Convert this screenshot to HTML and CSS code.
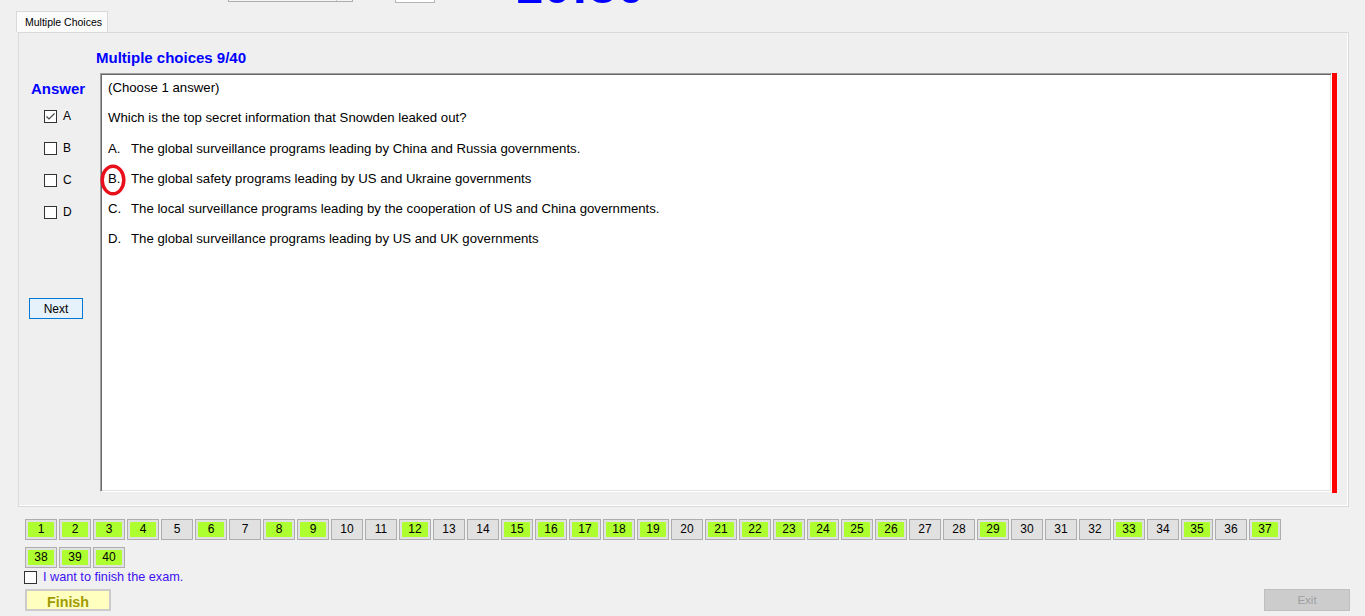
FILE: index.html
```html
<!DOCTYPE html>
<html>
<head>
<meta charset="utf-8">
<link rel="stylesheet" href="styles.css">
</head>
<body>
<div class="top">
  <div class="combo"><div class="combo-btn"></div></div>
  <div class="smallbox"></div>
  <div class="timer">10:30</div>
</div>
<div class="tabs"><div class="tab">Multiple Choices</div></div>
<div class="panel">
  <div class="title">Multiple choices 9/40</div>
  <div class="main">
    <div class="answers">
      <div class="ans-head">Answer</div>
      <div class="opt"><span class="cb"><svg width="11" height="11" viewBox="0 0 11 11"><polyline points="1.5,5.5 4,8 9.5,2.5" fill="none" stroke="#444" stroke-width="1.2"/></svg></span>A</div>
      <div class="opt"><span class="cb"></span>B</div>
      <div class="opt"><span class="cb"></span>C</div>
      <div class="opt"><span class="cb"></span>D</div>
      <button class="next">Next</button>
    </div>
    <div class="qbox">
      <div class="line">(Choose 1 answer)</div>
      <div class="line q">Which is the top secret information that Snowden leaked out?</div>
      <div class="line"><span class="lbl">A.</span>The global surveillance programs leading by China and Russia governments.</div>
      <div class="line mark"><span class="lbl">B.</span>The global safety programs leading by US and Ukraine governments<svg class="ring" width="26" height="32" viewBox="0 0 26 32"><ellipse cx="13" cy="16" rx="10.8" ry="13.8" fill="none" stroke="#e8101a" stroke-width="3.5"/></svg></div>
      <div class="line"><span class="lbl">C.</span>The local surveillance programs leading by the cooperation of US and China governments.</div>
      <div class="line"><span class="lbl">D.</span>The global surveillance programs leading by US and UK governments</div>
    </div>
    <div class="redbar"></div>
  </div>
</div>
<div class="nums">
  <div class="num"><span class="done">1</span></div>
  <div class="num"><span class="done">2</span></div>
  <div class="num"><span class="done">3</span></div>
  <div class="num"><span class="done">4</span></div>
  <div class="num"><span>5</span></div>
  <div class="num"><span class="done">6</span></div>
  <div class="num"><span>7</span></div>
  <div class="num"><span class="done">8</span></div>
  <div class="num"><span class="done">9</span></div>
  <div class="num"><span>10</span></div>
  <div class="num"><span>11</span></div>
  <div class="num"><span class="done">12</span></div>
  <div class="num"><span>13</span></div>
  <div class="num"><span>14</span></div>
  <div class="num"><span class="done">15</span></div>
  <div class="num"><span class="done">16</span></div>
  <div class="num"><span class="done">17</span></div>
  <div class="num"><span class="done">18</span></div>
  <div class="num"><span class="done">19</span></div>
  <div class="num"><span>20</span></div>
  <div class="num"><span class="done">21</span></div>
  <div class="num"><span class="done">22</span></div>
  <div class="num"><span class="done">23</span></div>
  <div class="num"><span class="done">24</span></div>
  <div class="num"><span class="done">25</span></div>
  <div class="num"><span class="done">26</span></div>
  <div class="num"><span>27</span></div>
  <div class="num"><span>28</span></div>
  <div class="num"><span class="done">29</span></div>
  <div class="num"><span>30</span></div>
  <div class="num"><span>31</span></div>
  <div class="num"><span>32</span></div>
  <div class="num"><span class="done">33</span></div>
  <div class="num"><span>34</span></div>
  <div class="num"><span class="done">35</span></div>
  <div class="num"><span>36</span></div>
  <div class="num"><span class="done">37</span></div>
  <div class="num"><span class="done">38</span></div>
  <div class="num"><span class="done">39</span></div>
  <div class="num"><span class="done">40</span></div>
</div>
<div class="fin-row"><span class="cb"></span><span class="fin-label">I want to finish the exam.</span></div>
<div class="bottom">
  <button class="finish">Finish</button>
  <button class="exit">Exit</button>
</div>
</body>
</html>
```
FILE: styles.css
```css
* { box-sizing: border-box; }
html, body { margin: 0; padding: 0; }
body {
  width: 1365px;
  height: 616px;
  overflow: hidden;
  background: #f0f0f0;
  font-family: "Liberation Sans", Arial, sans-serif;
  color: #000;
}
.top {
  display: flex;
  align-items: flex-start;
  height: 11px;
  overflow: hidden;
}
.combo {
  margin-left: 228px;
  width: 125px;
  height: 20px;
  margin-top: -18px;
  border: 1px solid #adadad;
  background: #f5f5f5;
  display: flex;
  justify-content: flex-end;
}
.combo-btn {
  width: 16px;
  border-left: 1px solid #c8c8c8;
}
.smallbox {
  margin-left: 42px;
  width: 40px;
  height: 21px;
  margin-top: -18px;
  border: 1px solid #b4b4b4;
  background: #fff;
}
.timer {
  margin-left: 80px;
  margin-top: -39px;
  font-size: 50px;
  line-height: 50px;
  font-weight: bold;
  color: #0000ff;
  letter-spacing: 0.5px;
}
.tabs {
  display: flex;
  margin-left: 16px;
  height: 21px;
}
.tab {
  width: 92px;
  height: 21px;
  border: 1px solid #d9d9d9;
  border-bottom: none;
  background: #fbfbfb;
  font-size: 10.5px;
  line-height: 20px;
  padding-left: 8px;
  white-space: nowrap;
}
.panel {
  margin-left: 18px;
  width: 1331px;
  height: 475px;
  border: 1px solid #dadada;
  box-shadow: inset -1px -1px 0 #fff;
  background: #efefef;
  padding-top: 15px;
}
.title {
  margin-left: 77px;
  line-height: 20px;
  font-size: 15px;
  font-weight: bold;
  color: #0000ff;
}
.main {
  display: flex;
  align-items: flex-start;
  margin-top: 5px;
}
.answers {
  width: 81px;
  display: flex;
  flex-direction: column;
  align-items: flex-start;
}
.ans-head {
  margin-left: 12px;
  padding-top: 6px;
  line-height: 20px;
  height: 27px;
  font-size: 15px;
  font-weight: bold;
  color: #0000ff;
}
.opt {
  display: flex;
  align-items: center;
  height: 32px;
  margin-left: 25px;
  font-size: 12px;
}
.cb {
  width: 13px;
  height: 13px;
  border: 1px solid #333;
  background: #fff;
  margin-right: 6px;
  display: flex;
  flex-shrink: 0;
}
.next {
  margin-top: 70px;
  margin-left: 10px;
  width: 54px;
  height: 21px;
  border: 1px solid #0078d7;
  background: #e5f1fb;
  font-family: "Liberation Sans", Arial, sans-serif;
  font-size: 12px;
  padding: 0;
  color: #000;
}
.qbox {
  width: 1232px;
  height: 419px;
  border: 1px solid;
  border-color: #a0a0a0 #fff #fff #a0a0a0;
  box-shadow: inset 1px 1px 0 #696969, inset -1px -1px 0 #e3e3e3;
  background: #fff;
  padding: 4px 0 0 7px;
  display: flex;
  flex-direction: column;
  gap: 10px;
  font-size: 13.2px;
}
.line {
  line-height: 20px;
  white-space: nowrap;
}
.q { margin-bottom: 1px; }
.lbl {
  display: inline-block;
  width: 23px;
}
.mark { position: relative; }
.ring {
  position: absolute;
  left: -8px;
  top: -5px;
}
.redbar {
  width: 5px;
  height: 420px;
  background: #ff0000;
}
.nums {
  margin-left: 25px;
  margin-top: 12px;
  width: 1270px;
  display: flex;
  flex-wrap: wrap;
  gap: 7px 2px;
}
.num {
  width: 32px;
  height: 21px;
  border: 1px solid #adadad;
  background: #e1e1e1;
  padding: 2px;
  display: flex;
}
.num span {
  flex: 1;
  text-align: center;
  font-size: 12px;
  line-height: 15px;
}
.num span.done { background: #adff2f; }
.fin-row {
  display: flex;
  align-items: center;
  margin-top: 2px;
  margin-left: 24px;
  height: 15px;
}
.fin-label {
  font-size: 12.7px;
  color: #3d10f0;
  line-height: 15px;
}
.bottom {
  display: flex;
  justify-content: space-between;
  margin-top: 4px;
  padding: 0 15px 0 25px;
}
.finish {
  width: 86px;
  height: 22px;
  border: 2px solid #cccccc;
  background: #ffffc0;
  color: #a09a00;
  font-family: "Liberation Sans", Arial, sans-serif;
  font-weight: bold;
  font-size: 14.3px;
  line-height: 20px;
  padding: 1px 0 0;
}
.exit {
  width: 86px;
  height: 22px;
  border: 1px solid #bfbfbf;
  background: #cccccc;
  color: #a0a0a0;
  font-family: "Liberation Sans", Arial, sans-serif;
  font-size: 11.5px;
  padding: 0;
}
```
